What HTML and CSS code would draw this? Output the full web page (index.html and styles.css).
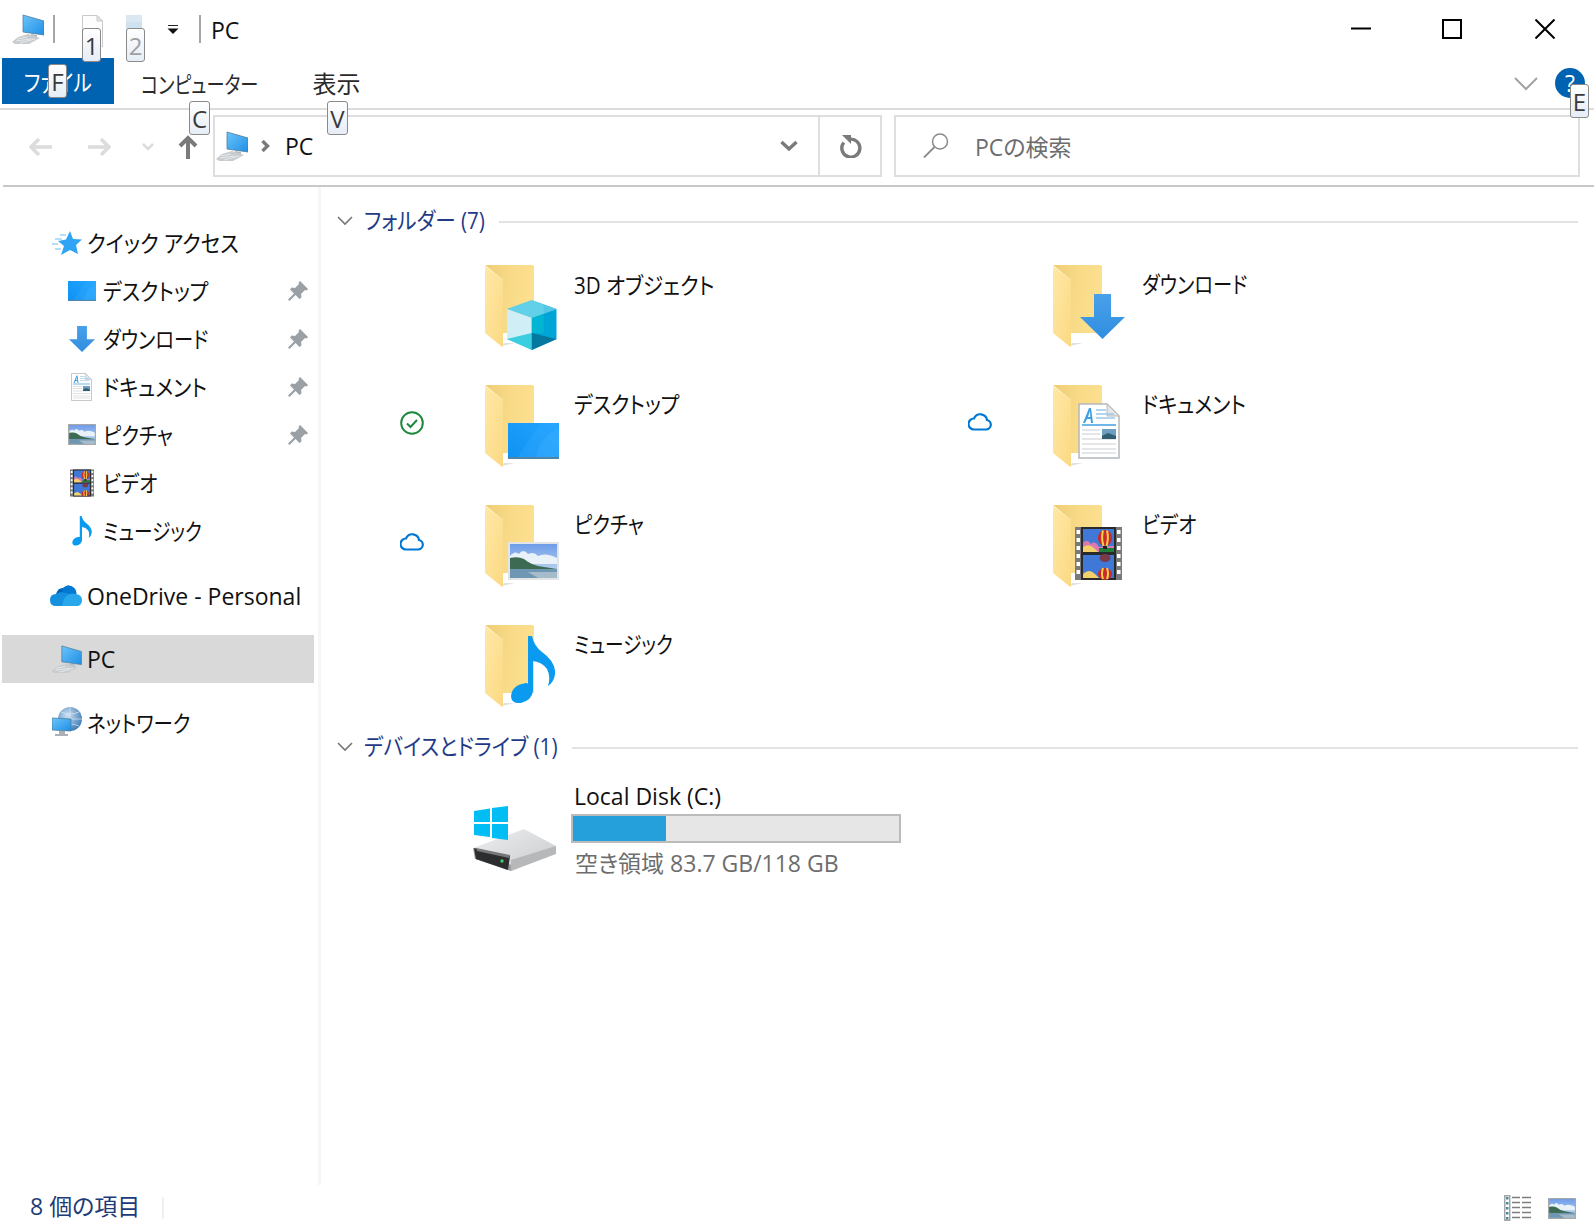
FILE: index.html
```html
<!DOCTYPE html>
<html lang="ja">
<head>
<meta charset="utf-8">
<title>PC</title>
<link rel="stylesheet" href="styles.css">
</head>
<body>
<svg class="defs" aria-hidden="true">
  <defs>
    <linearGradient id="gBack" x1="0" y1="0" x2="1" y2="0.2"><stop offset="0" stop-color="#efcd75"/><stop offset="0.5" stop-color="#f7d986"/><stop offset="1" stop-color="#fde08f"/></linearGradient>
    <linearGradient id="gFlap" x1="0" y1="0" x2="1" y2="1"><stop offset="0" stop-color="#ffe8a6"/><stop offset="1" stop-color="#fbd983"/></linearGradient>
    <linearGradient id="gDesk" x1="0" y1="1" x2="1" y2="0"><stop offset="0" stop-color="#0f92f2"/><stop offset="1" stop-color="#22a3ff"/></linearGradient>
    <linearGradient id="gArrow" x1="0" y1="0" x2="0" y2="1"><stop offset="0" stop-color="#4aa0ea"/><stop offset="1" stop-color="#2f8ee0"/></linearGradient>
    <linearGradient id="gScreen" x1="0" y1="0" x2="1" y2="1"><stop offset="0" stop-color="#6cc4fa"/><stop offset="1" stop-color="#1e8fe6"/></linearGradient>
    <linearGradient id="gSky" x1="0" y1="0" x2="0" y2="1"><stop offset="0" stop-color="#6b9ae8"/><stop offset="1" stop-color="#cfe4f2"/></linearGradient>
    <linearGradient id="gDiskTop" x1="0" y1="0" x2="1" y2="1"><stop offset="0" stop-color="#eeeff0"/><stop offset="1" stop-color="#c9cacc"/></linearGradient>
    <radialGradient id="gGlobe" cx="0.4" cy="0.35" r="0.7"><stop offset="0" stop-color="#cfe3f4"/><stop offset="1" stop-color="#3a78b4"/></radialGradient>

    <symbol id="folder" viewBox="0 0 56 84">
      <path d="M0 0H47Q49 0 49 2V68H18V15Z" fill="url(#gBack)"/>
      <path d="M18 68H32L18 84Z" fill="#fff"/>
      <path d="M17 81L30 78H19Z" fill="#cfcfcf" opacity=".6"/>
      <path d="M0 1L18 15V82L16 81L0 68Z" fill="url(#gFlap)"/>
    </symbol>

    <symbol id="cube" viewBox="0 0 50 50">
      <path d="M25 0L50 9L25 18L0 9Z" fill="#63d0e9"/>
      <path d="M25 0L50 9L37 14V5Z" fill="#52c3e3" opacity=".8"/>
      <path d="M0 9L25 18V50L0 39Z" fill="#cfeef6"/>
      <path d="M50 9L25 18V50L50 39Z" fill="#00a5d8"/>
      <path d="M25 18V33L12 39L0 39Z" fill="#cfeef6"/>
      <path d="M25 18L37 14V33L25 33Z" fill="#02b5d3"/>
      <path d="M0 39L25 33V50Z" fill="#3bcde0"/>
      <path d="M50 39L25 33V50Z" fill="#05789f"/>
    </symbol>

    <symbol id="desk" viewBox="0 0 51 36" preserveAspectRatio="none">
      <rect width="51" height="36" fill="url(#gDesk)"/>
      <path d="M10 34L32 0H51V34Z" fill="#35aaff" opacity=".35"/>
      <path d="M28 34Q32 12 51 6V34Z" fill="#45b4ff" opacity=".3"/>
      <rect y="34" width="51" height="2" fill="#4f86a8"/>
    </symbol>

    <symbol id="arrow" viewBox="0 0 45 45">
      <path d="M14 0H31V23H45L22.500 45L0 23H14Z" fill="url(#gArrow)"/>
    </symbol>

    <symbol id="doc" viewBox="0 0 42 56">
      <path d="M1 1H29L41 13V55H1Z" fill="#fff" stroke="#b4b8bc" stroke-width="1.500"/>
      <path d="M29 1V13H41Z" fill="#e4e6e8" stroke="#b4b8bc"/>
      <path d="M5 20L11 5H13L15 20H13L12.500 16H9L7 20ZM10 14H12.300L12 8Z" fill="#3f9fe0"/>
      <path d="M18 7H28M18 11H36M18 15H37" stroke="#9cc8e8" stroke-width="1.300"/>
      <path d="M4 22H38" stroke="#3f9fe0" stroke-width="1.500"/>
      <path d="M4 27H22M4 31H22M4 36H38M4 41H38M4 46H38M4 50H38" stroke="#c9cdd0" stroke-width="1.200"/>
      <rect x="24" y="26" width="14" height="10" fill="#6f9fc0"/>
      <path d="M24 33L30 30L38 33V36H24Z" fill="#2f5f70"/>
    </symbol>

    <symbol id="pic" viewBox="0 0 51 38" preserveAspectRatio="none">
      <rect class="pic-frame" x="1" y="1" width="49" height="36" fill="url(#gSky)" stroke-width="2"/>
      <path d="M2 14Q7 8 11 12Q15 6 20 12Q26 9 30 14Q38 10 49 16V22H2Z" fill="#e8f2f8"/>
      <path d="M2 16Q10 14 16 17Q22 22 30 24L49 27H2Z" fill="#3d6a52"/>
      <rect x="2" y="27" width="47" height="9" fill="#6f97b4"/>
      <path d="M20 30H49V36H30Z" fill="#a6bcca"/>
    </symbol>

    <symbol id="film" viewBox="0 0 47 53">
      <rect width="47" height="53" fill="#7a7a7a"/>
      <rect x="6" width="35" height="53" fill="#2a2a2a"/>
      <rect x="8" y="2" width="31" height="23" fill="#3f78d6"/>
      <rect x="8" y="28" width="31" height="23" fill="#3f78d6"/>
      <path d="M8 16Q12 11 16 17Q20 13 24 20L33 19H39V25H8Z" fill="#d97ab0"/>
      <path d="M8 20Q14 16 19 21L23 25H8Z" fill="#f3d06a"/>
      <path d="M24 21H39V25H24Z" fill="#1f7f3a"/>
      <ellipse cx="30" cy="11" rx="7" ry="8" fill="#c92a2a"/>
      <path d="M28 3.500Q26 11 28.500 19M32 3.500Q34 11 31.500 19" stroke="#f5d04a" stroke-width="2" fill="none"/>
      <rect x="28" y="19" width="4" height="3" fill="#222"/>
      <ellipse cx="30" cy="31" rx="5.500" ry="4" fill="#7a3a4a"/>
      <path d="M8 47Q14 41 20 47L24 51H8Z" fill="#f3d06a"/>
      <ellipse cx="30" cy="47" rx="7" ry="6" fill="#c92a2a"/>
      <path d="M28 41Q26 47 28 52M32 41Q34 47 32 52" stroke="#f5d04a" stroke-width="2" fill="none"/>
      <g fill="#fff"><rect x="1.500" y="3" width="3.500" height="4"/><rect x="1.500" y="11" width="3.500" height="4"/><rect x="1.500" y="19" width="3.500" height="4"/><rect x="1.500" y="27" width="3.500" height="4"/><rect x="1.500" y="35" width="3.500" height="4"/><rect x="1.500" y="43" width="3.500" height="4"/><rect x="42" y="3" width="3.500" height="4"/><rect x="42" y="11" width="3.500" height="4"/><rect x="42" y="19" width="3.500" height="4"/><rect x="42" y="27" width="3.500" height="4"/><rect x="42" y="35" width="3.500" height="4"/><rect x="42" y="43" width="3.500" height="4"/></g>
    </symbol>

    <symbol id="note" viewBox="0 0 44 68">
      <path d="M17 0H21Q23 10 31 16Q45 26 44 38Q43 46 37 50Q40 40 36 33Q31 26 22 25V55Q21 64 10 67Q0 68 0 60Q1 49 15 47Q17 47 17 48Z" fill="#0a9bf0"/>
    </symbol>

    <symbol id="pc" viewBox="0 0 32 30">
      <path d="M11 1L32 7V21L11 18Z" fill="url(#gScreen)" stroke="#4e7d9c" stroke-width=".8"/>
      <path d="M19 20L25 21V24L19 23Z" fill="#b7bcc0"/>
      <path d="M6 23L16 20L28 24L17 30H3L0 28Z" fill="#c8cccf"/>
      <path d="M5 25L15 23M4 27L19 25M8 29L23 25" stroke="#eef0f1" stroke-width=".8"/>
    </symbol>

    <symbol id="star" viewBox="0 0 30 24">
      <path d="M18 0L21 8L30 8.500L24 14L26 23L18 19L9 24L12 15L6 10L14 8.500Z" fill="#2fa4f5"/>
      <path d="M8 4H14M3 8H10M0 13H6M3 18H9" stroke="#9ad5fb" stroke-width="1.300"/>
    </symbol>

    <symbol id="onedrive" viewBox="0 0 32 21">
      <path d="M6 9Q8 2 14 3Q18 -2 24 3Q27 6 26 9Z" fill="#0364b8"/>
      <path d="M12 4Q17 -2 23 2Q26 4 26.500 9L14 12Z" fill="#0078d4"/>
      <path d="M6 9Q0 9 0 15Q0 21 6 21H14L20 9L11 7Z" fill="#1490df"/>
      <path d="M12 21H28Q32 20 32 15Q32 10 26 9Q19 7 14 14Z" fill="#28a8ea"/>
    </symbol>

    <symbol id="net" viewBox="0 0 30 30">
      <circle cx="18" cy="12" r="12" fill="url(#gGlobe)"/>
      <path d="M18 0V24M6 12H30M9 5Q18 9 27 5M9 19Q18 15 27 19" stroke="#d9e8f4" stroke-width=".7" fill="none"/>
      <path d="M0 11L19 12V24L0 23Z" fill="url(#gScreen)" stroke="#4e7d9c" stroke-width=".8"/>
      <path d="M7 24H13V27H16V29H3V27H7Z" fill="#aab0b4"/>
    </symbol>

    <symbol id="win" viewBox="0 0 34 34">
      <path d="M0 5L16 2.500V16H0ZM18 2L34 0V16H18ZM0 18H16V31L0 29ZM18 18H34V34L18 32Z" fill="#00bdf4"/>
    </symbol>

    <symbol id="disk" viewBox="0 0 84 42">
      <path d="M0 19L51 0L83 17L82 24L38 42L2 28Z" fill="url(#gDiskTop)"/>
      <path d="M0 19L38 36V42L2 30Z" fill="#9c9d9f"/>
      <path d="M1 19L37 27L35 41L3 30Z" fill="#2c2d2e"/>
      <path d="M3 19L37 26L36 29L4 22Z" fill="#76787a"/>
      <path d="M38 31L83 17V25L38 42Z" fill="#b7b8ba"/>
      <circle cx="29" cy="32" r="1.700" fill="#3fd06a"/>
    </symbol>
    <symbol id="cloud" viewBox="0 0 24 20">
      <path d="M6 18.500H18A4.800 4.800 0 0 0 19 9A6.800 6.800 0 0 0 6 7.500A5.500 5.500 0 0 0 6 18.500Z" fill="none" stroke="#0078d4" stroke-width="2.200"/>
    </symbol>
    <symbol id="pin" viewBox="0 0 20 20">
      <path d="M12 0L20 8L18.500 9.500L17 9L13 13L13.500 16.500L11.500 18L7.500 14L1.500 20L0 18.500L6 12.500L2 8.500L3.500 6.500L7 7L11 3L10.500 1.500Z" fill="#9aa0a4"/>
    </symbol>
  </defs>
</svg>

<div class="window">
  <header class="titlebar">
    <svg class="ti-pc"><use href="#pc"/></svg>
    <span class="ti-sep"></span>
    <svg class="ti-doc" viewBox="0 0 21 32"><path d="M.5.500H15L20.500 6V32H.5Z" fill="#fdfdfd" stroke="#c9c9c9"/><path d="M15 .5V6H20.500Z" fill="#e6e6e6" stroke="#c9c9c9"/></svg>
    <svg class="ti-fold" viewBox="0 0 16 26"><path d="M0 0H16V7H0Z" fill="#dbe7f2"/><path d="M0 7H16V20L0 26Z" fill="#cfe0ee"/></svg>
    <svg class="ti-drop" viewBox="0 0 12 9"><path d="M1 .5H11" stroke="#222"/><path d="M.5 3.500H11.500L6 9Z" fill="#111"/></svg>
    <span class="ti-sep ti-sep2"></span>
    <span class="ti-text">PC</span>
    <div class="winctl">
      <svg viewBox="0 0 20 20"><path d="M0 9.500H20" stroke="#000" stroke-width="2"/></svg>
      <svg viewBox="0 0 20 20"><rect x="1" y="1" width="18" height="18" fill="none" stroke="#000" stroke-width="2"/></svg>
      <svg class="ctl-close" viewBox="0 0 20 20"><path d="M.5.500L19.500 19.500M19.500.5L.5 19.500" stroke="#000" stroke-width="2"/></svg>
    </div>
  </header>

  <nav class="ribbon">
    <span class="tab tab-file"><span class="kana kana-file">ファイル</span></span>
    <span class="tab tab-comp"><span class="kana kana-comp">コンピューター</span></span>
    <span class="tab tab-view">表示</span>
    <svg class="collapse" viewBox="0 0 24 14"><path d="M1 1L12 12L23 1" fill="none" stroke="#a3a3a3" stroke-width="2"/></svg>
    <span class="help">?</span>
  </nav>

  <div class="navbar">
    <svg class="nav-ic nav-back" viewBox="0 0 24 18"><path d="M10 1L2 9L10 17M2 9H23" fill="none" stroke="#dcdcdc" stroke-width="3.500"/></svg>
    <svg class="nav-ic nav-fwd" viewBox="0 0 24 18"><path d="M14 1L22 9L14 17M22 9H1" fill="none" stroke="#dcdcdc" stroke-width="3.500"/></svg>
    <svg class="nav-chev" viewBox="0 0 12 8"><path d="M1 1L6 6L11 1" fill="none" stroke="#dcdcdc" stroke-width="2.500"/></svg>
    <svg class="nav-up" viewBox="0 0 20 24"><path d="M2 11L10 3L18 11M10 3V24" fill="none" stroke="#7a7a7a" stroke-width="4"/></svg>
    <div class="address">
      <svg class="addr-pc"><use href="#pc"/></svg>
      <svg class="addr-sep" viewBox="0 0 9 12"><path d="M1.500 1L6.500 6L1.500 11" fill="none" stroke="#7a7a7a" stroke-width="3.400"/></svg>
      <span class="addr-text">PC</span>
      <span class="addr-drop"><svg viewBox="0 0 18 12"><path d="M1.500 2L9 9L16.500 2" fill="none" stroke="#7a7a7a" stroke-width="3.400"/></svg></span>
      <span class="addr-refresh"><svg viewBox="0 0 24 24"><path d="M10.500 5.200A9 9 0 1 1 4.800 8.500" fill="none" stroke="#7a7a7a" stroke-width="3.400"/><path d="M3 1H12V10Z" fill="#7a7a7a"/></svg></span>
    </div>
    <div class="search">
      <svg class="search-ic" viewBox="0 0 26 25"><circle cx="17" cy="8.500" r="7.500" fill="none" stroke="#8a8a8a" stroke-width="1.500"/><path d="M11.500 14L1 24.500" stroke="#8a8a8a" stroke-width="1.800"/></svg>
      <span class="search-text">PCの検索</span>
    </div>
  </div>

  <div class="content">
    <aside class="sidebar">
      <div class="row row-top"><svg class="row-ic"><use href="#star" x="2" y="3" width="30" height="24"/></svg><span class="label"><span class="kana kana-quick">クイック アクセス</span></span></div>
      <div class="row row-sub"><svg class="row-ic"><use href="#desk" x="2" y="5" width="28" height="20"/></svg><span class="label"><span class="kana kana-desktop">デスクトップ</span></span><svg class="pin"><use href="#pin"/></svg></div>
      <div class="row row-sub"><svg class="row-ic"><use href="#arrow" x="3" y="2" width="26" height="26"/></svg><span class="label"><span class="kana kana-download">ダウンロード</span></span><svg class="pin"><use href="#pin"/></svg></div>
      <div class="row row-sub"><svg class="row-ic"><use href="#doc" x="5" y="1" width="21" height="28"/></svg><span class="label"><span class="kana kana-docs">ドキュメント</span></span><svg class="pin"><use href="#pin"/></svg></div>
      <div class="row row-sub framed"><svg class="row-ic"><use href="#pic" x="2" y="4" width="28" height="21"/></svg><span class="label"><span class="kana kana-pics">ピクチャ</span></span><svg class="pin"><use href="#pin"/></svg></div>
      <div class="row row-sub"><svg class="row-ic"><use href="#film" x="4" y="1" width="24" height="28"/></svg><span class="label"><span class="kana kana-video">ビデオ</span></span></div>
      <div class="row row-sub"><svg class="row-ic"><use href="#note" x="6" y="0" width="20" height="30"/></svg><span class="label"><span class="kana kana-music">ミュージック</span></span></div>
      <div class="row row-top row-drive"><svg class="row-ic"><use href="#onedrive" x="0" y="4" width="32" height="21"/></svg><span class="label label-latin">OneDrive - Personal</span></div>
      <div class="row row-top row-gap row-sel"><svg class="row-ic"><use href="#pc" x="1" y="1" width="31" height="28"/></svg><span class="label label-latin">PC</span></div>
      <div class="row row-top row-gap"><svg class="row-ic"><use href="#net" x="2" y="0" width="30" height="30"/></svg><span class="label label-net"><span class="kana kana-net">ネットワーク</span></span></div>
    </aside>

    <main class="main">
      <div class="group"><svg class="group-chev" viewBox="0 0 16 10"><path d="M1 1L8 8L15 1" fill="none" stroke="#777" stroke-width="1.600"/></svg><span class="group-title"><span class="kana kana-folder">フォルダー (7)</span></span><span class="group-line"></span></div>
      <div class="items">
        <div class="item"><span class="status"></span><svg class="big"><use href="#folder" width="56" height="84"/><use href="#cube" x="21.700" y="35" width="50" height="50"/></svg><span class="name name-3d"><span class="kana kana-3d">3D オブジェクト</span></span></div>
        <div class="item"><span class="status"></span><svg class="big"><use href="#folder" width="56" height="84"/><use href="#arrow" x="27" y="29" width="45" height="45"/></svg><span class="name"><span class="kana kana-download">ダウンロード</span></span></div>
        <div class="item"><span class="status"><svg viewBox="0 0 24 24"><circle cx="12" cy="12" r="10.800" fill="none" stroke="#1c8a3a" stroke-width="2"/><path d="M7 12.500L10.500 16L17 9" fill="none" stroke="#1c8a3a" stroke-width="2"/></svg></span><svg class="big"><use href="#folder" width="56" height="84"/><use href="#desk" x="23" y="38" width="51" height="36"/></svg><span class="name"><span class="kana kana-desktop">デスクトップ</span></span></div>
        <div class="item"><span class="status"><svg><use href="#cloud" width="24" height="20"/></svg></span><svg class="big"><use href="#folder" width="56" height="84"/><use href="#doc" x="25" y="18" width="42" height="56"/></svg><span class="name"><span class="kana kana-docs">ドキュメント</span></span></div>
        <div class="item"><span class="status"><svg><use href="#cloud" width="24" height="20"/></svg></span><svg class="big"><use href="#folder" width="56" height="84"/><use href="#pic" x="23" y="37" width="51" height="38"/></svg><span class="name"><span class="kana kana-pics">ピクチャ</span></span></div>
        <div class="item"><span class="status"></span><svg class="big"><use href="#folder" width="56" height="84"/><use href="#film" x="22" y="22" width="47" height="53"/></svg><span class="name"><span class="kana kana-video">ビデオ</span></span></div>
        <div class="item"><span class="status"></span><svg class="big"><use href="#folder" width="56" height="84"/><use href="#note" x="26" y="11" width="44" height="68"/></svg><span class="name"><span class="kana kana-music">ミュージック</span></span></div>
      </div>
      <div class="group group-2"><svg class="group-chev" viewBox="0 0 16 10"><path d="M1 1L8 8L15 1" fill="none" stroke="#777" stroke-width="1.600"/></svg><span class="group-title"><span class="kana kana-device">デバイスとドライブ (1)</span></span><span class="group-line"></span></div>
      <div class="drive">
        <svg class="drive-ic"><use href="#disk" x="0" y="23" width="84" height="42"/><use href="#win" x="1" y="0" width="34" height="34"/></svg>
        <div class="drive-info">
          <div class="drive-name">Local Disk (C:)</div>
          <div class="bar"><div class="bar-fill"></div></div>
          <div class="drive-free">空き領域 83.7 GB/118 GB</div>
        </div>
      </div>
    </main>
  </div>

  <footer class="status-bar framed">
    <span class="count">8 個の項目</span>
    <span class="st-sep"></span>
    <svg class="st-list" viewBox="0 0 27 26"><rect x=".75" y=".75" width="5" height="24.500" fill="#fff" stroke="#a5a5a5" stroke-width="1.500"/><path d="M8 2.500H16M18 2.500H27M8 7.500H16M18 7.500H27M8 12.500H16M18 12.500H27M8 17.500H16M18 17.500H27M8 22.500H16M18 22.500H27" stroke="#7e7e7e" stroke-width="1.300"/><path d="M2 2H4.500V4.500H2ZM2 7H4.500V9.500H2ZM2 12H4.500V14.500H2ZM2 17H4.500V19.500H2ZM2 22H4.500V24.500H2Z" fill="#4c8a9c"/></svg>
    <svg class="st-thumb"><use href="#pic" width="28" height="21"/></svg>
  </footer>

  <span class="tip tip-1">1</span>
  <span class="tip tip-2">2</span>
  <span class="tip tip-f">F</span>
  <span class="tip tip-c">C</span>
  <span class="tip tip-v">V</span>
  <span class="tip tip-e">E</span>
</div>
</body>
</html>
```

FILE: styles.css
```css
* { box-sizing: border-box; }
html, body { margin: 0; height: 100%; overflow: hidden; background: #fff; }
body {
  font-family: "Open Sans", "Noto Sans CJK JP", sans-serif;
  font-feature-settings: "palt";
  font-size: 23px;
  color: #111;
}
.defs { position: absolute; width: 0; height: 0; }
.window { position: relative; display: flex; flex-direction: column; height: 1231px; width: 1594px; }

/* the reference's kana are horizontally condensed */
.kana { display: inline-block; white-space: nowrap; transform: scaleX(var(--sx, 1)); transform-origin: left center; }
.kana-quick { --sx: .898; }
.kana-desktop { --sx: .88; }
.kana-download { --sx: .84; }
.kana-docs { --sx: .886; }
.kana-pics { --sx: .856; }
.kana-video { --sx: .85; }
.kana-music { --sx: .81; }
.kana-net { --sx: .85; }
.kana-comp { --sx: .79; margin-right: -31px; }
.kana-file { --sx: .85; transform-origin: center; }
.kana-3d { --sx: .895; }
.kana-folder { --sx: .895; margin-right: -14px; }
.kana-device { --sx: .9; margin-right: -21px; }

/* title bar */
.titlebar { height: 58px; display: flex; align-items: center; flex: none; }
.ti-pc { width: 32px; height: 30px; margin-left: 12px; }
.ti-sep { width: 2px; height: 28px; background: #a6a6a6; margin-left: 9px; }
.ti-doc { width: 21px; height: 32px; margin: 4px 0 0 27px; }
.ti-fold { width: 16px; height: 26px; margin: -2px 0 0 23px; }
.ti-drop { width: 12px; height: 9px; margin-left: 25px; }
.ti-sep2 { margin-left: 20px; }
.ti-text { margin-left: 10px; line-height: 30px; margin-top: 2px; }
.winctl { margin-left: auto; display: flex; gap: 71px; padding-right: 39px; }
.winctl svg { width: 20px; height: 20px; display: block; }
.winctl .ctl-close { margin-left: 2px; }

/* ribbon */
.ribbon { height: 52px; flex: none; display: flex; align-items: flex-start; border-bottom: 2px solid #dcdcdc; padding-left: 2px; }
.tab { height: 46px; line-height: 52px; }
.tab-file { width: 112px; background: #0063b1; color: #fff; text-align: center; line-height: 48px; }
.tab-comp { margin-left: 27px; color: #2a2a2a; }
.tab-view { margin-left: 54px; color: #2a2a2a; font-size: 24px; }
.collapse { width: 24px; height: 14px; margin: 19px 0 0 auto; }
.help { width: 30px; height: 30px; border-radius: 50%; background: #0063b1; color: #fff; text-align: center; line-height: 30px; margin: 10px 9px 0 17px; }

/* navigation */
.navbar { height: 77px; flex: none; display: flex; align-items: center; border-bottom: 2px solid #c8c8c8; padding-bottom: 4px; position: relative; margin-left: 3px; }
.nav-ic { width: 24px; height: 18px; margin-top: 2px; }
.nav-back { margin-left: 26px; }
.nav-fwd { margin-left: 34px; }
.nav-chev { width: 12px; height: 8px; margin: 2px 0 0 31px; }
.nav-up { width: 20px; height: 24px; margin-left: 24px; margin-top: 2px; }
.address { width: 669px; height: 62px; border: 2px solid #dedede; margin-left: 15px; display: flex; align-items: center; }
.addr-pc { width: 32px; height: 30px; margin-left: 1px; }
.addr-sep { width: 9px; height: 12px; margin-left: 13px; }
.addr-text { margin-left: 15px; }
.addr-drop { margin-left: auto; height: 100%; display: flex; align-items: center; justify-content: center; border-right: 2px solid #dedede; width: 62px; padding-left: 1px; }
.addr-drop svg { width: 18px; height: 12px; }
.addr-refresh { width: 60px; display: flex; justify-content: center; padding-left: 1px; }
.addr-refresh svg { width: 24px; height: 24px; }
.search { width: 686px; height: 62px; border: 2px solid #dedede; margin-left: 12px; display: flex; align-items: center; }
.search-ic { width: 26px; height: 25px; margin-left: 27px; }
.search-text { margin-left: 26px; color: #6d6d6d; }

/* body */
.content { flex: 1; display: flex; min-height: 0; }
.sidebar { width: 321px; flex: none; border-right: 3px solid #f6f6f6; padding: 32px 0 0 2px; }
.row { width: 312px; height: 48px; display: flex; align-items: center; }
.row-ic { width: 32px; height: 30px; flex: none; }
.row-top { padding-left: 48px; }
.label { margin-left: 5px; padding-bottom: 3px; }
.label-latin { padding-bottom: 0; }
.label-net { padding-bottom: 1px; }
.row-sub { padding-left: 64px; padding-right: 6px; }
.row-gap { margin-top: 15px; }
.row-drive { margin-top: 17px; }
.row-sel { background: #d9d9d9; }
.pin { width: 20px; height: 20px; margin-left: auto; }
.pic-frame { stroke: var(--frame, #e2e4e6); }
.framed { --frame: #a8a8a8; }

.main { flex: 1; padding: 14px 16px 0; min-width: 0; }
.group { height: 40px; display: flex; align-items: center; color: #1f3b87; }
.group-chev { width: 16px; height: 10px; flex: none; }
.group-title { margin-left: 11px; padding-bottom: 4px; }
.group-line { flex: 1; height: 2px; background: #e3e3e3; margin: 2px 0 0 14px; }
.group-2 { margin-top: 2px; }
.items { display: grid; grid-template-columns: 568px 568px; grid-auto-rows: 100px; row-gap: 20px; padding: 24px 0 0 59px; }
.item { display: flex; align-items: flex-start; }
.status { width: 32px; height: 24px; margin-top: 26px; display: flex; justify-content: center; flex: none; }
.status svg { width: 24px; height: 24px; }
.big { width: 80px; height: 90px; margin-left: 57px; flex: none; }
.name { margin-left: 9px; line-height: 38px; }
.name-3d { line-height: 40px; }

.drive { display: flex; padding: 13px 0 0 136px; }
.drive-ic { width: 88px; height: 68px; margin-top: 26px; flex: none; }
.drive-info { margin-left: 10px; width: 330px; }
.drive-name { line-height: 32px; margin-bottom: 2px; padding-left: 3px; }
.bar { height: 29px; border: 2px solid #bcbcbc; background: #e6e6e6; }
.bar-fill { width: 28.500%; height: 100%; background: #26a0da; }
.drive-free { line-height: 38px; margin-top: 1px; padding-left: 4px; color: #6d6d6d; white-space: nowrap; }

/* status bar */
.status-bar { height: 46px; flex: none; display: flex; align-items: center; }
.count { margin-left: 30px; color: #1d3b78; padding-bottom: 6px; }
.st-sep { width: 2px; height: 22px; background: #f0f0f0; margin-left: 22px; }
.st-list { width: 27px; height: 26px; margin-left: auto; }
.st-thumb { width: 28px; height: 21px; margin: 0 18px 0 17px; }

/* key tips */
.tip { position: absolute; height: 34px; width: 21px; border: 1.500px solid #8a8a8a; border-radius: 3px; background: linear-gradient(#fff, #e6edf6); color: #3a3a3a; text-align: center; line-height: 34px; font-size: 24px; }
.tip-1 { left: 82px; top: 28px; width: 19px; }
.tip-2 { left: 126px; top: 28px; width: 19px; color: #a0a0a0; }
.tip-f { left: 48px; top: 64px; width: 19px; }
.tip-c { left: 189px; top: 101px; }
.tip-v { left: 327px; top: 101px; }
.tip-e { left: 1570px; top: 84px; width: 19px; }
```
